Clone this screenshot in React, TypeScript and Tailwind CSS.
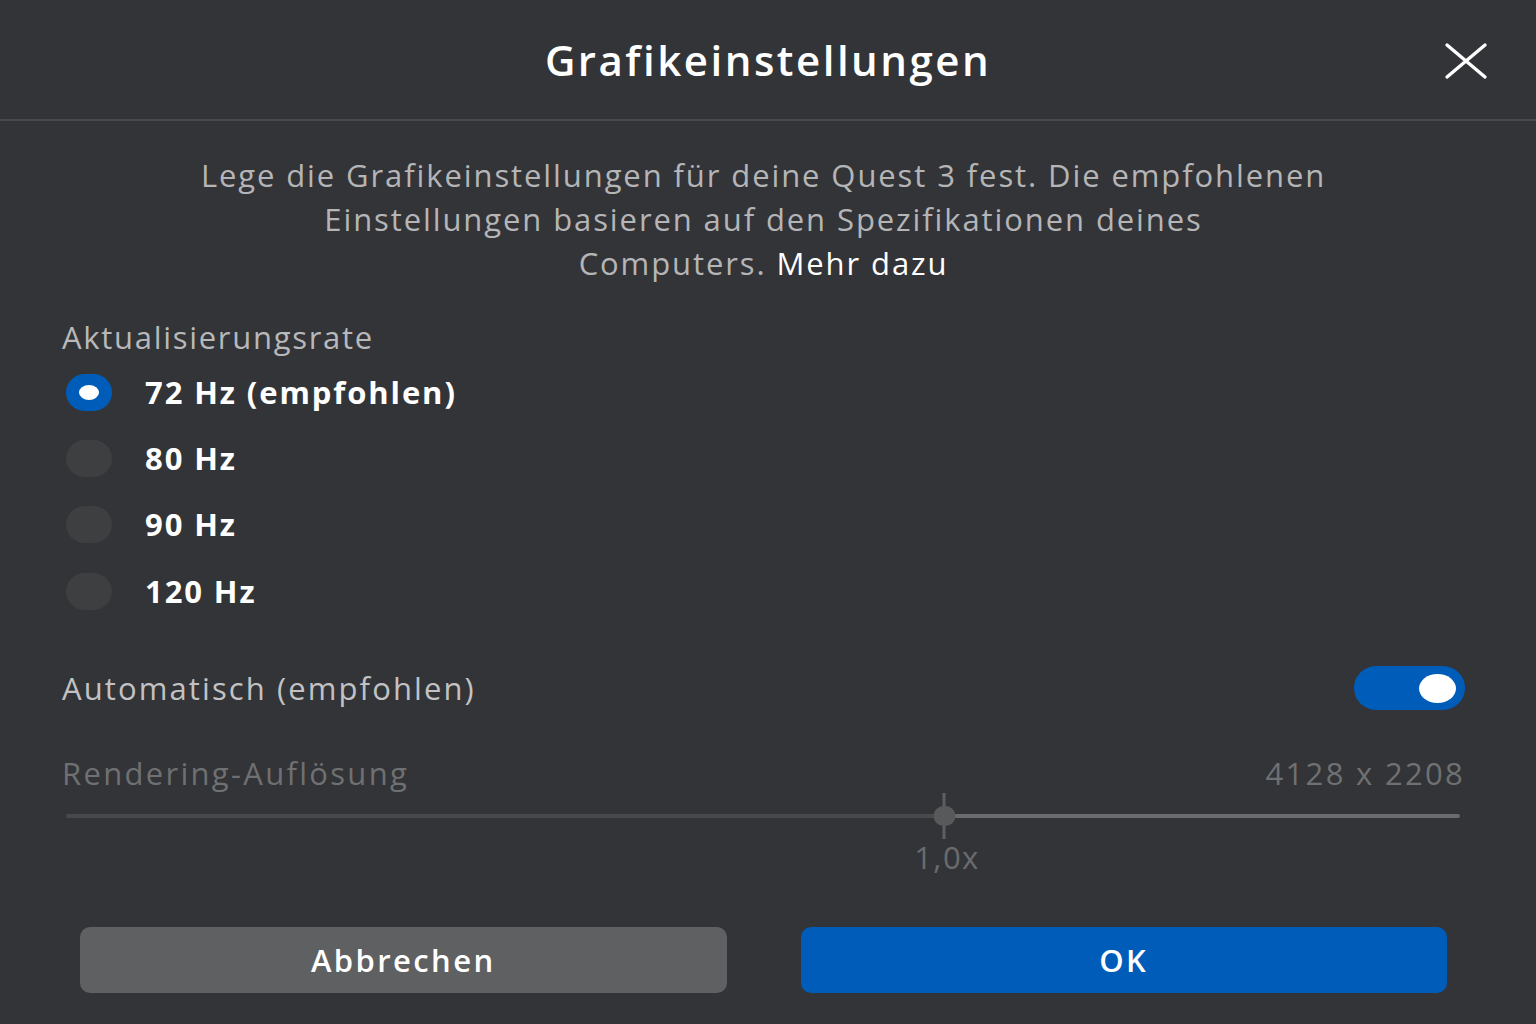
import React, { useState } from 'react';

const rates = ['72 Hz (empfohlen)', '80 Hz', '90 Hz', '120 Hz'];

const font = { fontFamily: '"Open Sans", "Noto Sans", sans-serif' };

export default function App() {
  const [rate, setRate] = useState(0);
  const [auto, setAuto] = useState(true);

  return (
    <main className="min-h-screen w-full bg-[#333437] text-white flex flex-col" style={font}>
      {/* Header */}
      <header className="relative h-[121px] flex items-center justify-center border-b-2 border-[#48494b]">
        <h1 className="text-[42px] font-semibold tracking-[2.5px] text-white">Grafikeinstellungen</h1>
        <button className="absolute right-[48px] top-[42px] w-[44px] h-[38px] flex items-center justify-center">
          <svg width="44" height="38" viewBox="0 0 44 38" fill="none">
            <path d="M3 3 L41 35 M41 3 L3 35" stroke="white" strokeWidth="3.4" strokeLinecap="round" />
          </svg>
        </button>
      </header>

      <section className="flex flex-col pl-[62px] pr-[71px]">
        <p className="mt-[32px] text-center text-[31px] leading-[44px] tracking-[1.9px] text-[#b5b5b7]">
          Lege die Grafikeinstellungen für deine Quest 3 fest. Die empfohlenen
          <br />
          Einstellungen basieren auf den Spezifikationen deines
          <br />
          Computers. <a className="text-white">Mehr dazu</a>
        </p>

        <div className="mt-[30px] text-[31px] leading-[44px] tracking-[1.7px] text-[#b8b8ba]">Aktualisierungsrate</div>

        <div className="flex flex-col">
          {rates.map((label, i) => (
            <button key={label} onClick={() => setRate(i)} className="h-[66.3px] flex items-center text-left">
              <span
                className={
                  rate === i
                    ? 'ml-[4px] w-[46px] h-[37px] rounded-full bg-[#005cb9] flex items-center justify-center'
                    : 'ml-[4px] w-[46px] h-[37px] rounded-full bg-[#3e3f41]'
                }
              >
                {rate === i && <span className="w-[20px] h-[15px] rounded-[50%] bg-white" />}
              </span>
              <span className="ml-[33px] text-[31px] font-bold tracking-[1.9px] text-white">{label}</span>
            </button>
          ))}
        </div>

        <div className="mt-[42px] h-[44px] flex items-center justify-between">
          <span className="text-[31px] tracking-[2.1px] text-[#c2c2c4]">Automatisch (empfohlen)</span>
          <button
            onClick={() => setAuto(!auto)}
            className={
              auto
                ? 'w-[111px] h-[44px] rounded-full bg-[#005cb9] flex items-center justify-end pr-[9px]'
                : 'w-[111px] h-[44px] rounded-full bg-[#5f6062] flex items-center justify-start pl-[9px]'
            }
          >
            <span className="w-[37px] h-[29px] rounded-[50%] bg-white" />
          </button>
        </div>

        <div className="mt-[41px] h-[44px] flex items-center justify-between text-[31px] tracking-[2.3px] text-[#6f7072]">
          <span>Rendering-Auflösung</span>
          <span>4128 x 2208</span>
        </div>

        <div className="mt-[1px] relative h-[40px] ml-[4px] mr-[5px] flex items-center">
          <div className="h-[4px] w-[63%] bg-[#48494b] rounded-l-full" />
          <div className="h-[4px] flex-1 bg-[#6a6b6d] rounded-r-full" />
          <div className="absolute left-[63%] top-[-3px] -translate-x-1/2 flex flex-col items-center">
            <div className="w-[3px] h-[46px] bg-[#5d5e60]" />
            <div className="absolute top-[13px] w-[22px] h-[20px] rounded-full bg-[#58595b]" />
          </div>
        </div>
        <div className="relative h-[42px]">
          <span className="absolute left-[885px] -translate-x-1/2 top-0 text-[31px] leading-[42px] tracking-[1.5px] text-[#6a6b6d]">1,0x</span>
        </div>

        <div className="mt-[49px] grid grid-cols-2 gap-[74px] pl-[18px] pr-[18px]">
          <button className="h-[66px] rounded-[10px] bg-[#5f6062] text-[31px] font-semibold tracking-[2.4px] text-white">
            Abbrechen
          </button>
          <button className="h-[66px] rounded-[10px] bg-[#005cb9] text-[31px] font-semibold tracking-[2.4px] text-white">OK</button>
        </div>
      </section>
    </main>
  );
}
